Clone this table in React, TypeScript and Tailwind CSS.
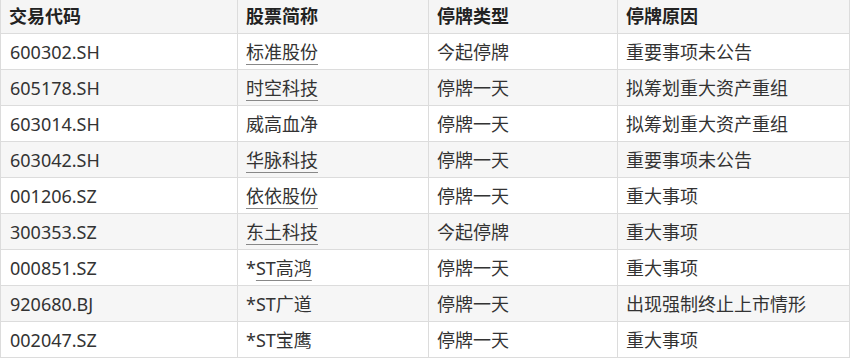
const rows: { code: string; name: string; star?: boolean; link?: boolean; type: string; reason: string }[] = [
  { code: "600302.SH", name: "标准股份", link: true, type: "今起停牌", reason: "重要事项未公告" },
  { code: "605178.SH", name: "时空科技", link: true, type: "停牌一天", reason: "拟筹划重大资产重组" },
  { code: "603014.SH", name: "威高血净", type: "停牌一天", reason: "拟筹划重大资产重组" },
  { code: "603042.SH", name: "华脉科技", link: true, type: "停牌一天", reason: "重要事项未公告" },
  { code: "001206.SZ", name: "依依股份", link: true, type: "停牌一天", reason: "重大事项" },
  { code: "300353.SZ", name: "东土科技", link: true, type: "今起停牌", reason: "重大事项" },
  { code: "000851.SZ", name: "ST高鸿", star: true, link: true, type: "停牌一天", reason: "重大事项" },
  { code: "920680.BJ", name: "ST广道", star: true, type: "停牌一天", reason: "出现强制终止上市情形" },
  { code: "002047.SZ", name: "ST宝鹰", star: true, type: "停牌一天", reason: "重大事项" },
];

const cell = "border border-[#dcdcdc] px-[8px] align-middle";
const head = `${cell} h-[33px] border-t-0 text-left font-bold text-[#222]`;
const body = `${cell} h-[36px] pt-[2px]`;

export default function App() {
  return (
    <div className="w-[850px] h-[359px] bg-white font-['Noto_Sans','Noto_Sans_CJK_SC',sans-serif] text-[18px] leading-[24px] text-[#333]">
      <table className="w-[850px] border-collapse table-fixed">
        <colgroup>
          <col className="w-[237px]" />
          <col className="w-[191px]" />
          <col className="w-[189px]" />
          <col />
        </colgroup>
        <thead>
          <tr className="bg-[#f5f5f5]">
            <th className={head}>交易代码</th>
            <th className={head}>股票简称</th>
            <th className={head}>停牌类型</th>
            <th className={head}>停牌原因</th>
          </tr>
        </thead>
        <tbody>
          {rows.map((r, i) => (
            <tr key={r.code} className={i % 2 === 1 ? "bg-[#f6f6f6]" : "bg-white"}>
              <td className={`${body} pl-[9px]`}>{r.code}</td>
              <td className={body}>
                {r.star && "*"}
                <span className={r.link ? "underline decoration-[#888] underline-offset-[5px] decoration-1" : ""}>{r.name}</span>
              </td>
              <td className={body}>{r.type}</td>
              <td className={body}>{r.reason}</td>
            </tr>
          ))}
        </tbody>
      </table>
    </div>
  );
}
